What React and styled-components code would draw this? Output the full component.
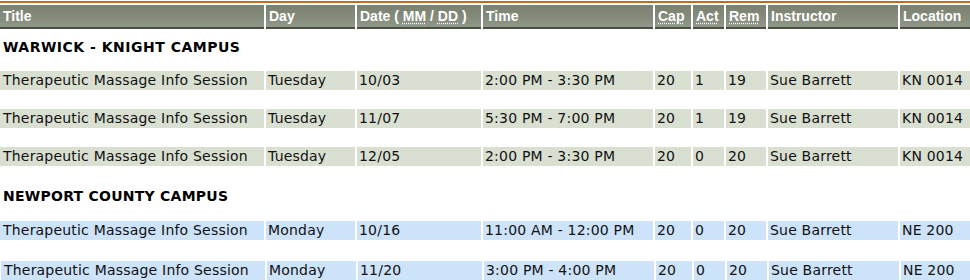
import React from "react";
import styled, { createGlobalStyle, css } from "styled-components";

const GlobalStyle = createGlobalStyle`
  html, body { margin: 0; padding: 0; background: #ffffff; }
  body { font-family: "DejaVu Sans", Verdana, sans-serif; }
`;

const COLS = "264px 89px 124px 170px 36px 31px 40px 130px 70px";

const Page = styled.div`
  width: 970px;
  padding-top: 1px;
  overflow: hidden;
`;

const Rule = styled.div`
  height: 2px;
  background: #c9691a;
  margin-bottom: 2px;
`;

const HeaderRow = styled.div`
  display: grid;
  grid-template-columns: ${COLS};
  column-gap: 2px;
`;

const HeadCell = styled.div`
  height: 22px;
  line-height: 22px;
  padding-left: 3px;
  background: linear-gradient(to bottom, #7a8170 0%, #838a79 50%, #91978a 100%);
  border-bottom: 2px solid #4a4f42;
  color: #ffffff;
  font-family: "Liberation Sans", Arial, sans-serif;
  font-weight: bold;
  font-size: 14px;
  white-space: nowrap;
  overflow: hidden;
`;

const Abbr = styled.abbr`
  text-decoration: underline dotted;
  text-underline-offset: 2px;
  cursor: help;
`;

const Group = styled.section`
  display: flex;
  flex-direction: column;
`;

const GroupTitle = styled.h3`
  margin: ${(p) => p.$top}px 0 ${(p) => p.$bottom}px;
  padding-left: 3px;
  height: 20px;
  line-height: 20px;
  font-family: "DejaVu Sans", Verdana, sans-serif;
  font-weight: bold;
  font-size: 14px;
  letter-spacing: ${(p) => p.$spacing}px;
  color: #000000;
`;

const Rows = styled.div`
  display: flex;
  flex-direction: column;
  row-gap: ${(p) => p.$gap}px;
`;

const Row = styled.div`
  display: grid;
  grid-template-columns: ${COLS};
  column-gap: 2px;
  padding-left: ${(p) => p.$shift || 0}px;
`;

const Cell = styled.div`
  height: 19px;
  line-height: 19px;
  padding-left: 2px;
  font-size: 14px;
  letter-spacing: 0.2px;
  color: #111111;
  white-space: nowrap;
  overflow: hidden;
  ${(p) =>
    p.$tone === "blue"
      ? css`background: #cde3fa;`
      : css`background: #d9e0d1;`}
  &:first-child { padding-left: 3px; }
`;

const groups = [
  {
    name: "WARWICK - KNIGHT CAMPUS",
    tone: "green",
    top: 8,
    bottom: 14,
    gap: 19,
    spacing: 0.5,
    rows: [
      ["Tuesday", "10/03", "2:00 PM - 3:30 PM", "20", "1", "19", "KN 0014"],
      ["Tuesday", "11/07", "5:30 PM - 7:00 PM", "20", "1", "19", "KN 0014"],
      ["Tuesday", "12/05", "2:00 PM - 3:30 PM", "20", "0", "20", "KN 0014"],
    ],
  },
  {
    name: "NEWPORT COUNTY CAMPUS",
    tone: "blue",
    top: 20,
    bottom: 15,
    gap: 21,
    spacing: 0.25,
    rows: [
      ["Monday", "10/16", "11:00 AM - 12:00 PM", "20", "0", "20", "NE 200"],
      ["Monday", "11/20", "3:00 PM - 4:00 PM", "20", "0", "20", "NE 200"],
    ],
  },
];

export default function App() {
  return (
    <Page>
      <GlobalStyle />
      <Rule />
      <HeaderRow>
        <HeadCell>Title</HeadCell>
        <HeadCell>Day</HeadCell>
        <HeadCell>
          Date ( <Abbr title="Month">MM</Abbr> / <Abbr title="Day">DD</Abbr> )
        </HeadCell>
        <HeadCell>Time</HeadCell>
        <HeadCell><Abbr title="Capacity">Cap</Abbr></HeadCell>
        <HeadCell><Abbr title="Actual">Act</Abbr></HeadCell>
        <HeadCell><Abbr title="Remaining">Rem</Abbr></HeadCell>
        <HeadCell>Instructor</HeadCell>
        <HeadCell>Location</HeadCell>
      </HeaderRow>
      {groups.map((g) => (
        <Group key={g.name}>
          <GroupTitle $top={g.top} $bottom={g.bottom} $spacing={g.spacing}>
            {g.name}
          </GroupTitle>
          <Rows $gap={g.gap}>
            {g.rows.map((r, i) => (
              <Row key={i} $shift={g.tone === "blue" && i === 1 ? 1 : 0}>
                <Cell $tone={g.tone}>Therapeutic Massage Info Session</Cell>
                <Cell $tone={g.tone}>{r[0]}</Cell>
                <Cell $tone={g.tone}>{r[1]}</Cell>
                <Cell $tone={g.tone}>{r[2]}</Cell>
                <Cell $tone={g.tone}>{r[3]}</Cell>
                <Cell $tone={g.tone}>{r[4]}</Cell>
                <Cell $tone={g.tone}>{r[5]}</Cell>
                <Cell $tone={g.tone}>Sue Barrett</Cell>
                <Cell $tone={g.tone}>{r[6]}</Cell>
              </Row>
            ))}
          </Rows>
        </Group>
      ))}
    </Page>
  );
}
